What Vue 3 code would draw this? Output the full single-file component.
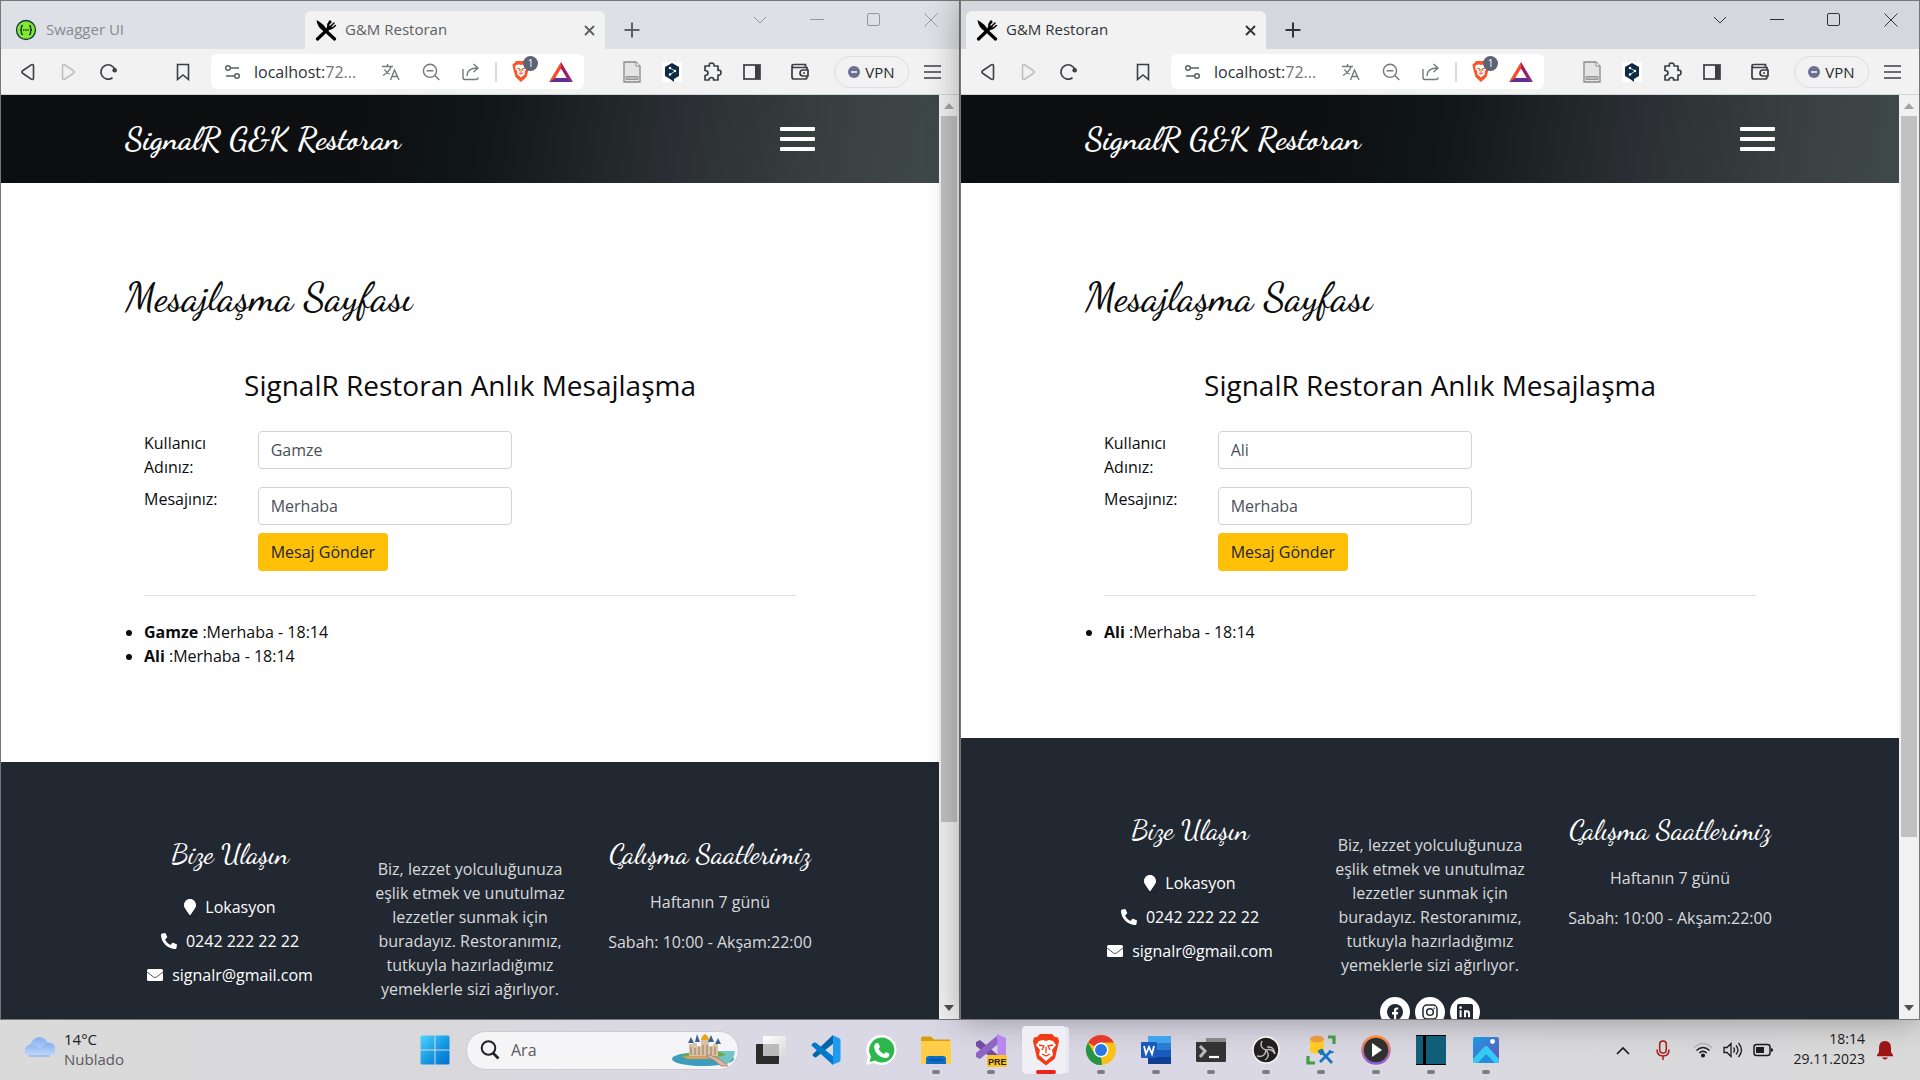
<script setup>
import { ref } from 'vue'

const windows = ref([
  {
    id: 'gamze', active: false, otherTab: 'Swagger UI', user: 'Gamze', message: 'Merhaba', thumb: 80.1,
    log: [{ from: 'Gamze', text: 'Merhaba - 18:14' }, { from: 'Ali', text: 'Merhaba - 18:14' }],
  },
  {
    id: 'ali', active: true, otherTab: '', user: 'Ali', message: 'Merhaba', thumb: 81.8,
    log: [{ from: 'Ali', text: 'Merhaba - 18:14' }],
  },
])
</script>

<template>
  <div class="desktop">
    <main class="windows">
      <section v-for="w in windows" :key="w.id" class="window" :class="{ active: w.active }">
        <header class="titlebar">
          <div v-if="w.otherTab" class="tab other">
            <svg width="22" height="22" viewBox="0 0 22 22"><circle cx="11" cy="11" r="9.5" fill="#85ea2d" stroke="#173647" stroke-width="1.3" /><path d="M8 6.5Q6.4 6.500 6.400 8V9.500Q6.400 11 5 11Q6.400 11 6.400 12.500V14Q6.400 15.500 8 15.500M14 6.500Q15.600 6.500 15.600 8V9.500Q15.600 11 17 11Q15.600 11 15.600 12.500V14Q15.600 15.500 14 15.500" fill="none" stroke="#173647" stroke-width="1.4" /><path d="M8 11h6" stroke="#173647" stroke-width="1.6" stroke-dasharray="1.500 .7" /></svg>
            <span>{{ w.otherTab }}</span>
          </div>
          <div class="tab current">
            <svg width="22" height="22" viewBox="0 0 22 22"><path d="M1.500 1Q9 5 12 11L9.500 13Q2 8 1.500 1Z" fill="#000" /><path d="M10.500 11.500L19.500 20M2.500 20L15 8" stroke="#000" stroke-width="3.200" stroke-linecap="round" /><path d="M12.500 8.500Q12.500 6 16 3M14 9L19 4M15 10Q17.500 9.500 20.500 6.500M15 1.800L12.800 5.500" fill="none" stroke="#000" stroke-width="1.500" stroke-linecap="round" /></svg>
            <span>G&amp;M Restoran</span>
            <button class="icon close" aria-label="Sekmeyi kapat"><svg width="11" height="11" viewBox="0 0 11 11"><path d="M1 1l9 9M10 1l-9 9" stroke="currentColor" stroke-width="1.900" /></svg></button>
          </div>
          <button class="icon newtab" aria-label="Yeni sekme"><svg width="16" height="16" viewBox="0 0 16 16"><path d="M8 .5v15M.5 8h15" stroke="currentColor" stroke-width="2" /></svg></button>
          <div class="controls">
            <button class="icon" aria-label="Sekme ara"><svg width="14" height="10" viewBox="0 0 14 10"><path d="M1 2l6 6 6-6" fill="none" stroke="currentColor" /></svg></button>
            <button class="icon" aria-label="Simge durumuna küçült"><svg width="14" height="14" viewBox="0 0 14 14"><path d="M0 6.500h14" stroke="currentColor" /></svg></button>
            <button class="icon" aria-label="Ekranı kapla"><svg width="14" height="14" viewBox="0 0 14 14"><rect x=".5" y=".5" width="12" height="12" rx="1.500" fill="none" stroke="currentColor" /></svg></button>
            <button class="icon" aria-label="Kapat"><svg width="14" height="14" viewBox="0 0 14 14"><path d="M.5.5l13 13M13.500.5l-13 13" stroke="currentColor" /></svg></button>
          </div>
        </header>

        <nav class="toolbar">
          <button class="icon" aria-label="Geri"><svg width="16" height="18" viewBox="0 0 16 18"><path d="M2.300 8Q1.200 9 2.300 10L11.500 16.300Q13.500 17.200 13.500 15V3Q13.500.8 11.500 1.700Z" fill="none" stroke="currentColor" stroke-width="1.600" /></svg></button>
          <button class="icon faint" aria-label="İleri"><svg width="16" height="18" viewBox="0 0 16 18"><path d="M13.700 8Q14.800 9 13.700 10L4.500 16.300Q2.500 17.200 2.500 15V3Q2.500.8 4.500 1.700Z" fill="none" stroke="currentColor" stroke-width="1.600" /></svg></button>
          <button class="icon" aria-label="Yenile"><svg width="18" height="18" viewBox="0 0 18 18"><path d="M13.500 14.700A7.200 7.200 0 1 1 16 6.800" fill="none" stroke="currentColor" stroke-width="1.700" /><circle cx="15.700" cy="7.300" r="2.300" fill="currentColor" /></svg></button>
          <button class="icon bookmark" aria-label="Yer işareti"><svg width="14" height="18" viewBox="0 0 14 18"><path d="M1.500 1.500h11v15L7 12l-5.500 4.500Z" fill="none" stroke="currentColor" stroke-width="1.600" /></svg></button>
          <div class="address">
            <svg class="site" width="18" height="16" viewBox="0 0 18 16" fill="none" stroke="#5c5f63" stroke-width="1.500"><circle cx="4" cy="4" r="2.300" /><path d="M7 4h8M2 12h8" /><circle cx="13" cy="12" r="2.300" /></svg>
            <span class="url">localhost:<em>72...</em></span>
            <button class="icon" aria-label="Çevir"><svg width="20" height="18" viewBox="0 0 20 18" fill="none" stroke="currentColor" stroke-width="1.400"><path d="M1 3.500h11M6.500 1v2.500M10 4Q8 9 2 12.500M3.500 6.500Q5 9.500 8.500 11M9.500 17l4-10 4.500 10M11 13.500h5.500" /></svg></button>
            <button class="icon" aria-label="Uzaklaştır"><svg width="20" height="18" viewBox="0 0 20 18" fill="none" stroke="currentColor" stroke-width="1.400"><circle cx="9" cy="7.800" r="6.600" /><path d="M5.500 7.800h7M13.800 12.500l4.500 4.500" /></svg></button>
            <button class="icon" aria-label="Paylaş"><svg width="20" height="18" viewBox="0 0 20 18" fill="none" stroke="currentColor" stroke-width="1.400"><path d="M2 6v8.500Q2 16.500 4 16.500h11q2 0 2-2M6 13Q6 5 16.500 5M12.500 1l4.500 4-4.500 4" /></svg></button>
            <i class="divider"></i>
            <button class="icon shields" aria-label="Brave kalkanı">
              <svg width="20" height="23" viewBox="0 0 20 23"><path d="M5 1h10l2 2.500 1.500.5-.5 4-2.500 9L10 22l-5.500-5L2 8l-.5-4L3 3.500Z" fill="#fb542b" /><path d="M5 5l3-.5L10 5l2-.5 3 .5 1 3-2.500 4 .5 2-4 3.500L6 14l.5-2L4 8Z" fill="#fff" /><path d="M6 8l3 1-1 2M14 8l-3 1 1 2M10 9v5M8 13l2 1 2-1" fill="none" stroke="#fb542b" /></svg>
              <b>1</b>
            </button>
            <button class="icon bat" aria-label="Brave Rewards"><svg width="24" height="20" viewBox="0 0 24 20"><path d="M12 0L0 20l6-3.500L12 6.500Z" fill="#ff4724" /><path d="M12 0l12 20-6-3.500L12 6.500Z" fill="#9e1f63" /><path d="M0 20h24l-6-4H6Z" fill="#662d91" /></svg></button>
          </div>
          <div class="extensions">
            <button class="icon" aria-label="Belge"><svg width="20" height="22" viewBox="0 0 20 22"><path d="M2 1h12l4 4v16H2Z" fill="#e4e4e4" stroke="#888" stroke-width="1.300" /><path d="M14 1v4h4" fill="#fff" stroke="#888" /><path d="M4 15.500h12v3H4Z" fill="#b5b5b5" stroke="#999" /></svg></button>
            <button class="icon" aria-label="Çeviri eklentisi"><svg width="20" height="20" viewBox="0 0 20 20"><rect width="20" height="20" rx="2" fill="#fff" /><path d="M10 1l7 4v9l-5 3v3l-4-3-5-3V5Z" fill="#0f2b46" /><path d="M8 6l5 3-5 3.500" fill="none" stroke="#bed1de" /><circle cx="8" cy="6" r="1.200" fill="#fff" /><circle cx="13" cy="9" r="1.200" fill="#fff" /><circle cx="8" cy="12.500" r="1.200" fill="#fff" /></svg></button>
            <button class="icon" aria-label="Uzantılar"><svg width="20" height="20" viewBox="0 0 20 20"><path d="M3 4h4.500Q6.500 1 9.500 1T12 4h4v4.500Q19 7.500 19 10.500T16 13v5h-4.500Q12 15.500 9.500 15.500T7 18H3v-4.500Q6 13.500 6 11T3 8.500Z" fill="none" stroke="currentColor" stroke-width="1.700" stroke-linejoin="round" /></svg></button>
            <button class="icon" aria-label="Kenar çubuğu"><svg width="18" height="16" viewBox="0 0 18 16"><rect x="1" y="1" width="16" height="14" fill="none" stroke="currentColor" stroke-width="1.700" /><path d="M12 1h5v14h-5Z" fill="currentColor" /></svg></button>
          </div>
          <button class="icon wallet" aria-label="Cüzdan"><svg width="20" height="18" viewBox="0 0 20 18" fill="none" stroke="currentColor" stroke-width="1.700"><path d="M17 7V4.500H4Q2 4.500 2 3t2-1.500h11.500V4M2 3v11q0 2 2 2h11q2 0 2-2v-1" /><path d="M18 7h-5q-3 0-3 3t3 3h5Z" /><path d="M13 10h2" /></svg></button>
          <button class="vpn"><svg width="12" height="12" viewBox="0 0 12 12"><circle cx="6" cy="6" r="6" fill="#6b7094" /><path d="M3 6h6" stroke="#fff" stroke-width="1.500" /></svg>VPN</button>
          <button class="icon menu" aria-label="Menü"><svg width="17" height="14" viewBox="0 0 17 14"><path d="M0 1h17M0 7h17M0 13h17" stroke="currentColor" stroke-width="1.500" /></svg></button>
        </nav>

        <div class="viewport">
          <div class="page">
            <header class="hero">
              <div class="container hero-row">
                <a href="#" class="brand">SignalR G&amp;K Restoran</a>
                <button class="burger" aria-label="Menüyü aç"><i></i><i></i><i></i></button>
              </div>
            </header>
            <section class="container chat">
              <h2>Mesajlaşma Sayfası</h2>
              <div class="panel">
                <h3>SignalR Restoran Anlık Mesajlaşma</h3>
                <form class="form" @submit.prevent>
                  <label :for="w.id + '-user'">Kullanıcı Adınız:</label>
                  <input :id="w.id + '-user'" v-model="w.user" type="text">
                  <label :for="w.id + '-msg'">Mesajınız:</label>
                  <input :id="w.id + '-msg'" v-model="w.message" type="text">
                  <button type="submit">Mesaj Gönder</button>
                </form>
                <hr>
              </div>
              <ul class="log">
                <li v-for="m in w.log" :key="m.from"><b>{{ m.from }}</b> :{{ m.text }}</li>
              </ul>
            </section>
            <footer class="footer">
              <div class="container columns">
                <div class="contact">
                  <h4>Bize Ulaşın</h4>
                  <a href="#"><svg width="12" height="16" viewBox="0 0 384 512" fill="#fff"><path d="M192 0C86 0 0 86 0 192c0 77 27 99 172 310 10 13 30 13 40 0C357 291 384 269 384 192 384 86 298 0 192 0Z" /></svg>Lokasyon</a>
                  <a href="#"><svg width="16" height="16" viewBox="0 0 512 512" fill="#fff"><path d="M19 24L122 0c12-2 23 3 28 14l48 112c4 10 1 22-7 29l-61 50c36 77 99 140 178 177l50-61c7-8 19-11 29-7l112 48c10 5 15 17 13 28l-24 104c-3 11-12 18-24 18C208 512 0 304 0 48 0 36 8 27 19 24Z" /></svg>0242 222 22 22</a>
                  <a href="#"><svg width="16" height="16" viewBox="0 0 16 16"><rect y="2" width="16" height="12" rx="1.500" fill="#fff" /><path d="M0 5l6.500 5q1.500 1 3 0L16 5" fill="none" stroke="#222831" stroke-width=".8" /></svg>signalr@gmail.com</a>
                </div>
                <div class="about">
                  <p>Biz, lezzet yolculuğunuza eşlik etmek ve unutulmaz lezzetler sunmak için buradayız. Restoranımız, tutkuyla hazırladığımız yemeklerle sizi ağırlıyor.</p>
                  <div class="social">
                    <a href="#" aria-label="Facebook"><svg width="16" height="16" viewBox="0 0 16 16"><circle cx="8" cy="8" r="8" fill="#222831" /><path d="M7 16v-5.500H5V8h2V6.300Q7 3.500 9.700 3.500l1.600.1v2h-1Q9.200 5.600 9.200 6.600V8h2l-.4 2.500H9.200V16Z" fill="#fff" /></svg></a>
                    <a href="#" aria-label="Instagram"><svg width="16" height="16" viewBox="0 0 16 16" fill="none" stroke="#222831" stroke-width="1.500"><rect x="1" y="1" width="14" height="14" rx="4" /><circle cx="8" cy="8" r="3.300" /><path d="M11.500 4.300h1.200" /></svg></a>
                    <a href="#" aria-label="LinkedIn"><svg width="16" height="16" viewBox="0 0 16 16"><rect x="0" y="0" width="16" height="16" rx="1.500" fill="#222831" /><path d="M3.600 6.200v7M8 13.200v-7M8 9.500q0-2.300 2-2.300t2 2.300v3.700" fill="none" stroke="#fff" stroke-width="2" /><circle cx="3.600" cy="3.600" r="1.300" fill="#fff" /></svg></a>
                  </div>
                </div>
                <div class="hours">
                  <h4>Çalışma Saatlerimiz</h4>
                  <p>Haftanın 7 günü</p>
                  <p>Sabah: 10:00 - Akşam:22:00</p>
                </div>
              </div>
            </footer>
          </div>
          <div class="scrollbar">
            <svg width="10" height="6" viewBox="0 0 10 6"><path d="M0 6l5-6 5 6Z" fill="#a3a3a3" /></svg>
            <div class="track"><i :style="{ height: w.thumb + '%' }"></i></div>
            <svg width="10" height="6" viewBox="0 0 10 6"><path d="M0 0h10L5 6Z" fill="#505050" /></svg>
          </div>
        </div>
      </section>
    </main>

    <footer class="taskbar">
      <div class="weather">
        <svg width="30" height="20" viewBox="0 0 30 20"><defs><linearGradient id="cl" x1="0" y1="0" x2="0" y2="1"><stop offset="0" stop-color="#86aef0" /><stop offset="1" stop-color="#c5dcfb" /></linearGradient></defs><circle cx="14.500" cy="9" r="9" fill="url(#cl)" /><path d="M6 19.500a6 6 0 1 1 3-11q5 1 7 4 1-6 7.500-7A7 7 0 0 1 24 19.500Z" fill="url(#cl)" /><path d="M4 19h21" stroke="#7ea5e8" /></svg>
        <div><p>14°C</p><p class="muted">Nublado</p></div>
      </div>
      <nav class="apps">
        <button class="app" aria-label="Başlat"><svg width="30" height="30" viewBox="0 0 30 30"><defs><linearGradient id="wn" x1="0" y1="0" x2="1" y2="1"><stop offset="0" stop-color="#4fd3ff" /><stop offset=".6" stop-color="#1193e0" /><stop offset="1" stop-color="#0070d0" /></linearGradient></defs><path d="M2 .5h12.500v14H.5V2Q.5.5 2 .5ZM15.500.5H28q1.500 0 1.500 1.500v12.500h-14ZM.5 15.500h14v14H2Q.5 29.500.5 28ZM15.500 15.500h14V28q0 1.500-1.500 1.500H15.500Z" fill="url(#wn)" /></svg></button>
        <label class="search">
          <svg width="20" height="20" viewBox="0 0 20 20" fill="none" stroke="#222" stroke-width="2"><circle cx="8.500" cy="8" r="6.800" /><path d="M13 13l5.500 5.500" stroke-width="2.600" /></svg>
          <input type="text" placeholder="Ara" aria-label="Ara">
          <svg width="64" height="34" viewBox="0 0 64 34"><ellipse cx="31" cy="26" rx="31" ry="7" fill="#3d9dbd" /><path d="M34 18h29q-1 9-8 13Z" fill="#71c5c5" /><path d="M8 24q10-7 40-5l6 3q-15 5-46 2Z" fill="#75a843" /><path d="M10 24q20-4 38 0l-8 2H16Z" fill="#d8a25e" /><path d="M17 11h4v-1h4v3h4V6h8v7h4v-2h5v12H17Z" fill="#d9c2a5" /><path d="M16 10l3-6 3 6ZM23 9l2-8 3 8ZM36 9l3-7 3 7ZM43 11l3-6 3 6Z" fill="#3d618f" /><path d="M29 7q0-4 4-6 4 2 4 6Z" fill="#e8a51c" /><path d="M19 14v8M23 15v7M27 14v8M31 12v10M35 12v10M39 14v8M43 14v8" stroke="#927b69" /><path d="M34 23l4-1q13 5 18 11h-7Q43 27 34 23Z" fill="#d8b8a5" stroke="#a96f68" stroke-width=".7" /></svg>
        </label>
        <button class="app" aria-label="Görev görünümü"><svg width="32" height="30" viewBox="0 0 32 30"><defs><linearGradient id="tv" x1="0" y1="0" x2="1" y2="1"><stop offset="0" stop-color="#fff" /><stop offset="1" stop-color="#d8d8d8" /></linearGradient></defs><rect x="1" y="9" width="23" height="20" rx="1" fill="#2b2b2b" /><rect x="8" y="1" width="23" height="20" rx="1" fill="url(#tv)" /><path d="M8 9h16v12H8Z" fill="#aaa" opacity=".75" /></svg></button>
        <button class="app" aria-label="Visual Studio Code"><svg width="32" height="32" viewBox="0 0 32 32"><path d="M23 1L3 20q-1 1 0 2l2 1.500 1.500-.5L24 9Z" fill="#0065a9" /><path d="M23 31L2 12q-1-1 0-2l2-1.500 2 .2L24 23Z" fill="#007acc" /><path d="M22 1l7 3q1.500 1 1.500 2v20q0 1.500-1.500 2l-7 3q1 0 1-2V3q0-2-1-2Z" fill="#1f9cf0" /></svg></button>
        <button class="app" aria-label="WhatsApp"><svg width="32" height="32" viewBox="0 0 32 32"><path d="M16 1a15 15 0 1 1-7 28L1 31l2-8A15 15 0 0 1 16 1Z" fill="#fff" /><path d="M16.500 3.500a12.500 12.500 0 1 1-6.500 23L4.500 28l1.500-5.500a12.500 12.500 0 0 1 10.500-19Z" fill="#2bb94b" /><path d="M11.500 9l2 .2 1.500 3.800-1.500 2q2 3.500 5.500 5l2-2 3.500 1.800Q24.500 24 20 24 10 22 9 13q0-3 2.500-4Z" fill="#fff" /></svg></button>
        <button class="app run" aria-label="Dosya Gezgini"><svg width="32" height="32" viewBox="0 0 32 32"><path d="M1 4q0-1.500 1.500-1.500H11l3 3h16V10H1Z" fill="#d69e0b" /><path d="M1 7h30v23H1Z" fill="#ffcd4a" /><path d="M6 30v-5q0-3 3-3h14q3 0 3 3v5Z" fill="#0a6fc4" /><path d="M9 26h14" stroke="#064b91" stroke-width="1.300" /></svg></button>
        <button class="app run" aria-label="Visual Studio"><svg width="32" height="36" viewBox="0 0 32 36"><path d="M1 10l4-2 18 15v8L1 14Z" fill="#744aa5" /><path d="M1 25l4 2L23 12V3L1 21Z" fill="#8d65c5" /><path d="M22 2l9 4v23l-8 3Z" fill="#b987f0" /><rect x="12" y="23" width="20" height="12" rx="1.500" fill="#ffc529" /><text x="13" y="33" font-size="9" font-weight="700" font-family="Liberation Sans, sans-serif" fill="#222">PRE</text></svg></button>
        <button class="app run selected" aria-label="Brave"><svg width="28" height="32" viewBox="0 0 28 32"><path d="M8 0h12l3 3 3 .5 1 4-2 8-2 9-9 7-9-7-2-9-2-8 1-4L5 3Z" fill="#f43b17" /><path d="M7 7l4-1L14 7l3-1 4 1 3 4-4 5 1 5-7 6-7-6 1-5-4-5Z" fill="#fff" /><path d="M7 11l5 1-2 4M21 11l-5 1 2 4M14 13v6M10 20l4 2 4-2" fill="none" stroke="#f43b17" stroke-width="1.300" /></svg></button>
        <button class="app run" aria-label="Chrome"><svg width="32" height="32" viewBox="0 0 32 32"><circle cx="16" cy="16" r="15" fill="#fbc116" /><path d="M16 16L3 8.500A15 15 0 0 1 29 8.500H16Z" fill="#e33b2e" /><path d="M3 8.500L9.500 19.500 16 23l1 8A15 15 0 0 1 3 8.500Z" fill="#269447" /><circle cx="16" cy="16" r="7.500" fill="#fff" /><circle cx="16" cy="16" r="6" fill="#2878e4" /></svg></button>
        <button class="app run" aria-label="Word"><svg width="30" height="30" viewBox="0 0 30 30"><path d="M7 1h23v7H7Z" fill="#41a5ee" /><path d="M7 8h23v7H7Z" fill="#2b7cd3" /><path d="M7 15h23v7H7Z" fill="#185abd" /><path d="M7 22h23v7H7Z" fill="#103f91" /><rect y="7" width="16" height="16" rx="1" fill="#185abd" /><path d="M3 11l2 8 3-7 3 7 2-8" fill="none" stroke="#fff" stroke-width="1.800" /></svg></button>
        <button class="app run" aria-label="Terminal"><svg width="30" height="24" viewBox="0 0 30 24"><rect width="30" height="24" rx="1.500" fill="#333" /><path d="M0 0h10v4H0Z" fill="#ccc" /><path d="M10 0h20v4H10Z" fill="#888" /><path d="M4 8l5 5-5 6" fill="none" stroke="#bbb" stroke-width="3" /><path d="M13 19h10" stroke="#fff" stroke-width="2.200" /></svg></button>
        <button class="app run" aria-label="OBS Studio"><svg width="28" height="28" viewBox="0 0 28 28"><circle cx="14" cy="14" r="13" fill="#211f20" stroke="#f6f6f6" stroke-width="1.500" /><path d="M10 5q-3 7 4 9 6-2 9 4M23 18q-1-8-8-7M14 14q-1 8-9 6M14 14q5 6-1 10" fill="none" stroke="#b9b9b9" stroke-width="1.500" /></svg></button>
        <button class="app run" aria-label="SQL Server Management Studio"><svg width="30" height="30" viewBox="0 0 30 30"><path d="M4 4v13q7 3 14 0V4Z" fill="#ffcb22" /><ellipse cx="11" cy="4" rx="7" ry="3.500" fill="#e69a45" /><path d="M22 2h6v7M2 21v7h7" fill="none" stroke="#439b46" stroke-width="3.200" /><path d="M14 27L25 16M15 16l11 12" stroke="#1875be" stroke-width="2.800" /><path d="M12 16l4-2 2 3-3 3ZM23 15l2 3 3-1" fill="#1875be" stroke="#1875be" /></svg></button>
        <button class="app run" aria-label="Medya Oynatıcı"><svg width="32" height="32" viewBox="0 0 32 32"><defs><linearGradient id="mp" x1="0" y1="0" x2="0" y2="1"><stop offset="0" stop-color="#ff8d3b" /><stop offset="1" stop-color="#8b5bd8" /></linearGradient></defs><circle cx="16" cy="16" r="13.500" fill="#303030" stroke="url(#mp)" stroke-width="2.500" /><path d="M12 9l10 7-10 7Z" fill="#fff" /></svg></button>
        <button class="app run" aria-label="Defter"><svg width="30" height="30" viewBox="0 0 30 30"><path d="M0 0h30v30H0Z" fill="#125d78" /><path d="M0 .5h30M0 29.500h30M8.500 0v30" stroke="#000" /><path d="M7 0h3v30H7Z" fill="#000" /></svg></button>
        <button class="app run" aria-label="Fotoğraflar"><svg width="28" height="28" viewBox="0 0 28 28"><defs><linearGradient id="ph" x1="0" y1="0" x2="1" y2="1"><stop offset="0" stop-color="#189be5" /><stop offset="1" stop-color="#6952b3" /></linearGradient></defs><rect x="1" y="1" width="26" height="26" rx="2" fill="url(#ph)" /><path d="M1 23L12 11q2-2 4 0l11 12v2q0 2-2 2H3q-2 0-2-2Z" fill="#35c9f5" /><path d="M6 27l8-9 9 9Z" fill="#208ddd" /><circle cx="20.500" cy="5.500" r="2.400" fill="#fff" /></svg></button>
      </nav>
      <div class="tray">
        <button class="icon" aria-label="Gizli simgeler"><svg width="14" height="9" viewBox="0 0 14 9"><path d="M1 8l6-6 6 6" fill="none" stroke="#1c1c1c" stroke-width="1.700" /></svg></button>
        <button class="icon" aria-label="Mikrofon"><svg width="14" height="20" viewBox="0 0 14 20" fill="none" stroke="#b01818" stroke-width="1.500"><rect x="3.700" y="1" width="6.600" height="12" rx="3.300" /><path d="M1 9.500q0 6.500 6 6.500t6-6.500M7 16v4" /></svg></button>
        <button class="icon slim" aria-label="Wi-Fi"><svg width="20" height="16" viewBox="0 0 20 16" fill="none" stroke="#1c1c1c" stroke-width="1.500"><path d="M1 6q9-9 18 0" stroke="#b5b5b5" /><path d="M3.500 8.500q6.500-6 13 0M6.300 11q3.700-3.500 7.400 0" /><circle cx="10" cy="13.500" r="1.300" fill="#1c1c1c" /></svg></button>
        <button class="icon slim" aria-label="Ses"><svg width="20" height="16" viewBox="0 0 20 16" fill="none" stroke="#1c1c1c" stroke-width="1.300"><path d="M1 5.500h3L8 1.500v13l-4-4H1ZM10.500 5.500q2 2.500 0 5M13 3.500q4 4.500 0 9M15.500 1q6 7 0 14" /></svg></button>
        <button class="icon slim" aria-label="Pil"><svg width="20" height="14" viewBox="0 0 20 14"><rect x="1" y="1.500" width="16" height="11" rx="2.500" fill="none" stroke="#1c1c1c" stroke-width="1.500" /><path d="M3 4h8v6H3ZM18 5l2 1v2l-2 1Z" fill="#1c1c1c" /></svg></button>
        <time><span>18:14</span><span>29.11.2023</span></time>
        <button class="icon bell" aria-label="Bildirimler"><svg width="18" height="20" viewBox="0 0 18 20" fill="#a01414"><path d="M9 1q6 0 6 7v4l2 3v1.200H1V15l2-3V8q0-7 6-7ZM6 17.500h6q-1 2-3 2t-3-2Z" /></svg></button>
      </div>
    </footer>
  </div>
</template>

<style>
body { margin: 0; }
</style>

<style scoped>
* { box-sizing: border-box; }
.desktop { height: 100vh; display: flex; flex-direction: column; overflow: hidden; font-family: "Open Sans", "Noto Sans", sans-serif; font-size: 16px; line-height: 24px; color: #0c0c0c; }
button, input { font: inherit; color: inherit; }
button { border: 0; padding: 0; background: none; }
a { color: inherit; text-decoration: none; }
p, h2, h3, h4 { margin: 0; font-weight: 400; }
svg { display: block; flex: none; }
.icon { display: flex; align-items: center; justify-content: center; width: 40px; height: 32px; flex: none; }

.windows { flex: 1; min-height: 0; display: flex; }
.window { flex: 1; min-width: 0; display: flex; flex-direction: column; border: 1px solid #767676; background: #fff; }
.window.active { position: relative; box-shadow: 0 0 32px rgba(0, 0, 0, .32); }
.titlebar { flex: none; height: 48px; display: flex; align-items: flex-end; background: #dde1e5; color: #5c5f63; font-size: 15px; }
.active .titlebar { background: #d4d8dc; color: #303438; padding-left: 5px; }
.tab { height: 38px; width: 300px; display: flex; align-items: center; gap: 8px; padding-left: 10px; }
.tab span { padding-bottom: 2px; }
.tab.other { width: 304px; padding-left: 14px; color: #868a8e; gap: 9px; }
.tab.current { background: #f2f2f2; border-radius: 6px 6px 0 0; }
.tab .close { width: 32px; margin-left: auto; }
.newtab { width: 54px; height: 38px; }
.controls { display: flex; align-self: flex-start; margin-left: auto; padding-top: 3px; }
.controls .icon { width: 57px; }
.window:not(.active) .controls { color: #94989b; }
.toolbar { flex: none; height: 46px; display: flex; align-items: center; padding: 0 7px; background: #f2f2f2; border-bottom: 1px solid #cfd5d9; color: #3c3f43; }
.faint { color: #bcbfc2; }
.bookmark { margin-left: 35px; }
.address { flex: 1; min-width: 0; height: 35px; margin-left: 8px; padding: 0 3px 0 13px; display: flex; align-items: center; background: #fff; border-radius: 6px; color: #75787c; }
.url { margin-left: 12px; margin-right: auto; font-size: 16px; white-space: nowrap; color: #2f3236; }
.url em { font-style: normal; color: #72767a; }
.divider { width: 2px; height: 20px; background: #d9dadd; margin: 0 4px; }
.shields { position: relative; }
.shields b { position: absolute; right: 3px; top: 0; width: 15px; height: 15px; border-radius: 8px; background: #5f6273; color: #fff; font-size: 10px; line-height: 15px; font-weight: 400; }
.extensions { display: flex; margin-left: 28px; }
.wallet { margin-left: 8px; }
.vpn { width: 75px; height: 32px; margin-left: 14px; border: 1px solid #dfdfe3; border-radius: 16px; display: flex; align-items: center; justify-content: center; gap: 5px; font-size: 15px; color: #26292d; }
.menu { margin-left: 3px; }

.viewport { flex: 1; min-height: 0; display: flex; }
.page { flex: 1; min-width: 0; overflow: hidden; }
.scrollbar { flex: none; width: 20px; display: flex; flex-direction: column; align-items: center; justify-content: space-between; padding: 8px 2px; background: #f1f1f1; }
.track { flex: 1; align-self: stretch; margin: 7px 0; }
.track i { display: block; background: #c1c1c1; }
.container { max-width: 720px; margin: 0 auto; padding: 0 15px; }
.brand, h2, h4 { font-family: "Dancing Script", "Liberation Serif", cursive; font-weight: 500; white-space: nowrap; }
.hero { height: 88px; background: linear-gradient(100deg, #0c0e10 0%, #0d0f11 38%, #101618 50%, #1c2224 60%, #2b2f33 72%, #384040 88%, #40494a 100%); }
.hero-row { height: 88px; display: flex; align-items: center; justify-content: space-between; }
.brand { font-size: 32px; line-height: 40px; font-weight: 700; color: #fff; }
.burger { width: 35px; display: flex; flex-direction: column; gap: 6px; }
.burger i { height: 4px; border-radius: 1px; background: #fff; }
.chat { padding-top: 90px; padding-bottom: 94px; }
h2 { font-size: 40px; line-height: 48px; }
.panel { padding: 47px 19px 0; }
h3 { font-size: 28px; line-height: 34px; font-weight: 500; text-align: center; margin-bottom: 29px; }
.form { display: grid; grid-template-columns: repeat(12, 1fr); gap: 8px 30px; align-items: start; }
.form label { grid-column: 1 / span 2; }
.form input { grid-column: 3 / span 5; width: 100%; height: 38px; padding: 0 12px; border: 1px solid #ced4da; border-radius: 4px; background: #fff; color: #495057; }
.form button { grid-column: 3 / span 5; justify-self: start; height: 38px; padding: 0 13px; border-radius: 4px; background: #ffc107; color: #212529; }
hr { margin: 24px 0; border: 0; border-top: 1px solid #e3e3e3; }
.log { margin: 0; padding: 0 0 0 19px; }
.footer { background: #222831; color: #d9dadc; padding: 75px 0; text-align: center; }
.columns { display: grid; grid-template-columns: repeat(3, 1fr); gap: 30px; }
h4 { font-size: 28px; line-height: 34px; color: #fff; display: flex; justify-content: center; }
.contact { display: flex; flex-direction: column; align-items: center; gap: 10px; color: #fff; }
.contact h4 { margin-bottom: 14px; }
.contact a { display: flex; align-items: center; gap: 9px; }
.about { padding-top: 20px; }
.social { display: flex; justify-content: center; gap: 5px; margin-top: 20px; }
.social a { width: 30px; height: 30px; border-radius: 50%; background: #fff; display: flex; align-items: center; justify-content: center; }
.hours h4 { margin-bottom: 19px; }
.hours p { white-space: nowrap; margin-bottom: 16px; }

.taskbar { flex: none; height: 60px; display: grid; grid-template-columns: 1fr auto 1fr; align-items: center; background: linear-gradient(90deg, #dadada 0%, #d9d9dc 22%, #dbd8e6 42%, #dad8e5 65%, #d9d9dd 82%, #dadada 100%); font-size: 15px; line-height: 20px; color: #1b1b1b; }
.weather { display: flex; align-items: center; gap: 9px; padding: 0 0 2px 25px; }
.weather svg { margin-top: -4px; }
.weather p { font-size: 15px; }
.muted { color: #5a5a5e; }
.apps { display: flex; align-items: center; }
.app { position: relative; width: 55px; height: 60px; display: flex; align-items: center; justify-content: center; }
.app svg { position: relative; }
.run::after { content: ""; position: absolute; bottom: 6px; left: 50%; margin-left: -4px; width: 8px; height: 4px; border-radius: 2px; background: #7c7c82; }
.selected::before { content: ""; position: absolute; left: 4px; top: 6px; width: 44px; height: 48px; border-radius: 4px; background: #f0eff6; box-shadow: 4px 0 0 -1px #e9e8f0, 0 0 1px #aaa; }
.selected::after { width: 20px; margin-left: -10px; background: #e8251c; }
.search { width: 273px; height: 39px; margin: 0 4px; padding: 0 2px 0 13px; display: flex; align-items: center; gap: 11px; border-radius: 20px; background: #f5f4f7; border: 1px solid #cbcad2; }
.search input { flex: 1; min-width: 0; border: 0; padding: 0; background: none; font-size: 16px; }
.search input::placeholder { color: #5a5a5e; opacity: 1; }
.tray { display: flex; align-items: center; justify-content: flex-end; padding-right: 20px; }
.tray .slim { width: 30px; }
.tray .icon:nth-child(3) { margin-left: 5px; }
.tray time { width: 87px; display: flex; flex-direction: column; text-align: right; padding-bottom: 2px; font-size: 14px; }
.tray .bell { width: 30px; margin-left: 5px; }
</style>
